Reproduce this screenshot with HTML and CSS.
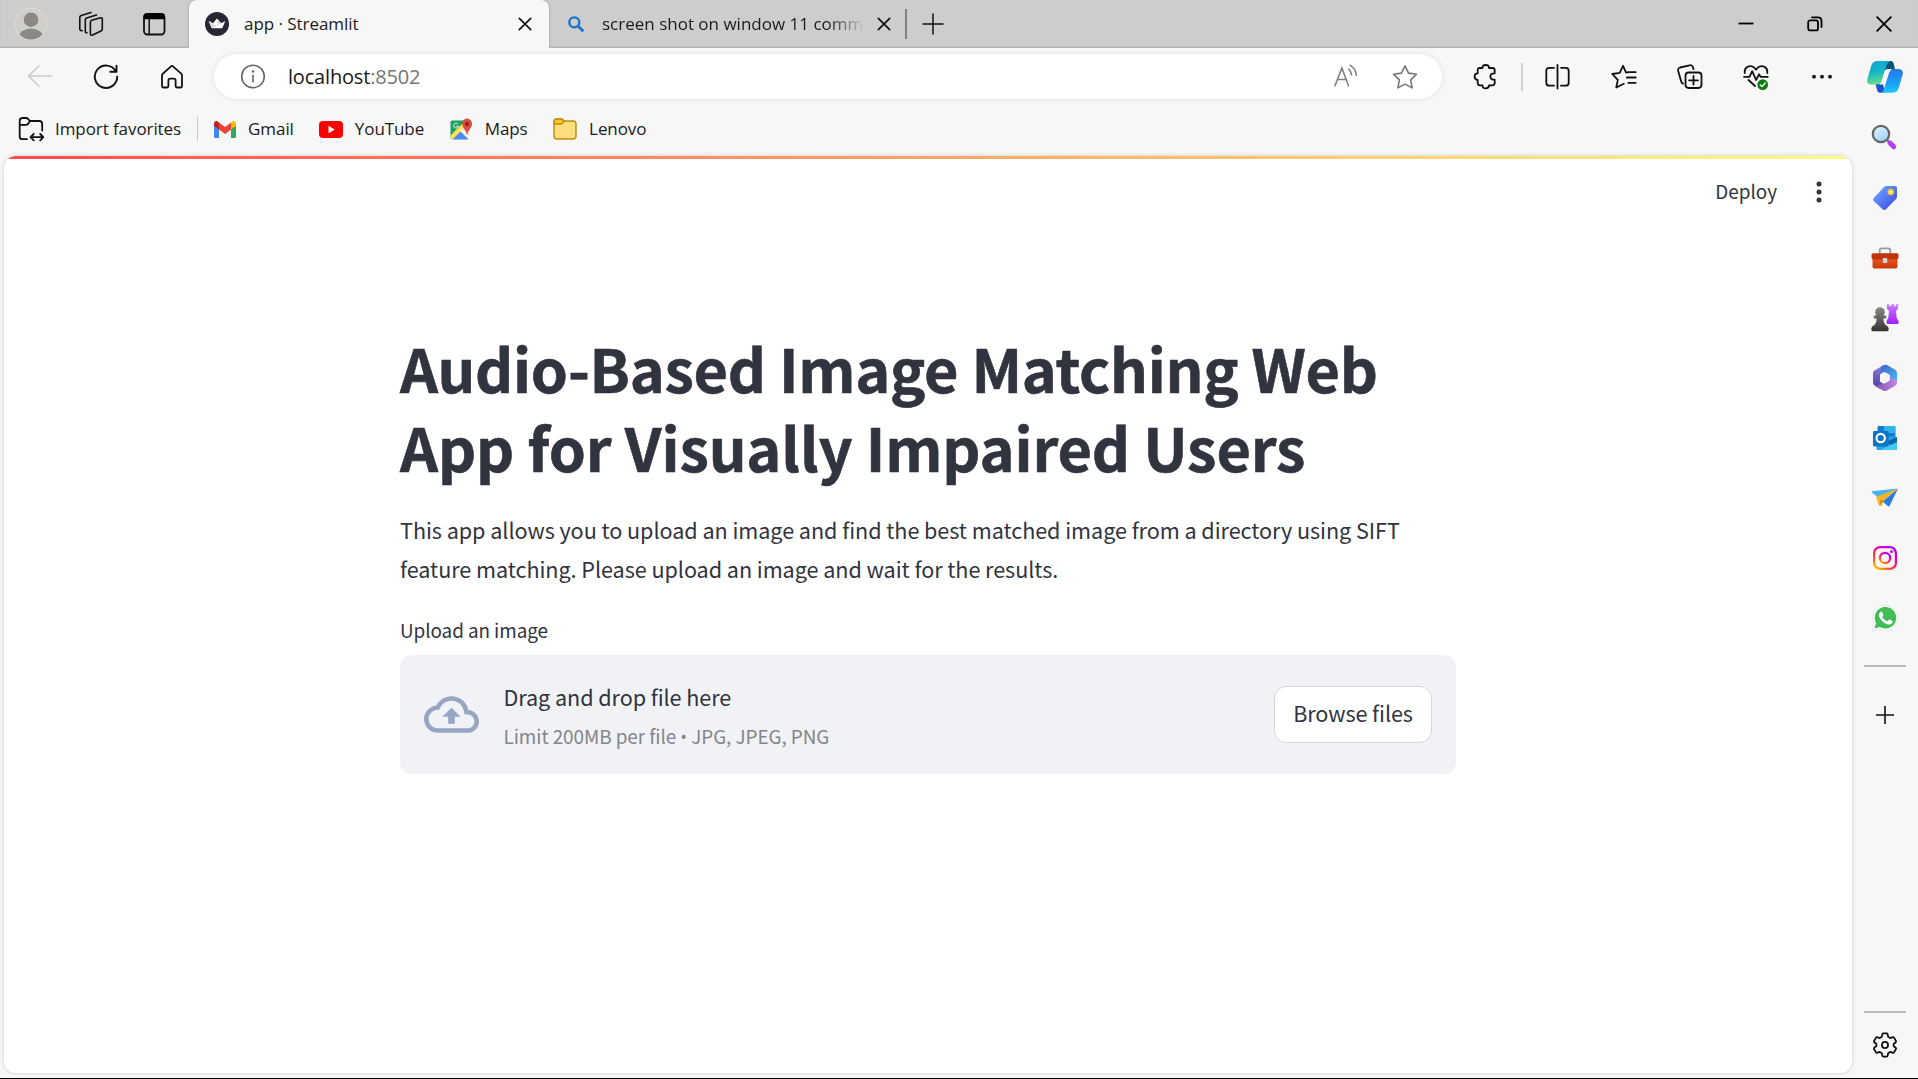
FILE: index.html
```html
<!DOCTYPE html>
<html lang="en">
<head>
<meta charset="utf-8">
<title>app · Streamlit</title>
<link rel="stylesheet" href="styles.css">
</head>
<body>
<div class="window">
  <header class="titlebar">
    <div class="title-tools">
      <svg class="avatar" viewBox="0 0 34 34"><defs><clipPath id="av"><circle cx="17" cy="17" r="15.5"/></clipPath></defs><circle cx="17" cy="17" r="16" fill="#d1cfcb" stroke="#e0deda"/><g fill="#8c8985" clip-path="url(#av)"><circle cx="17" cy="12.7" r="7.3"/><ellipse cx="17" cy="31" rx="12.5" ry="9.5"/></g></svg>
      <svg class="i26 workspaces" viewBox="0 0 26 26" fill="none" stroke="#111" stroke-width="1.6" stroke-linejoin="round" stroke-linecap="round"><path d="M12.4 11.2Q12.4 9.8 13.7 9.3L22.5 6.8Q24.3 6.5 24.3 8.2V18Q24.3 19.4 23 20L14.6 24Q12.4 24.8 12.4 22.6Z"/><path d="M9 21.7Q7.5 22 7.3 20.4V9Q7.3 7.5 8.7 7L18.4 3.9"/><path d="M4.1 19.6Q1.8 20 1.8 17.8V6.4Q1.8 5 3.2 4.5L13 1.6"/></svg>
      <svg class="i26" viewBox="0 0 26 26"><rect x="3" y="3" width="20.5" height="20.5" rx="3.4" fill="none" stroke="#111" stroke-width="1.8"/><path d="M2.5 8.2V5.5Q2.5 2.3 5.8 2.3H20.5Q24 2.3 24 5.5V8.2Z" fill="#000"/><path d="M8.2 8V23" stroke="#111" stroke-width="1.5"/></svg>
    </div>
    <div class="tab active">
      <svg class="i24" viewBox="0 0 24 24"><circle cx="12" cy="12" r="12" fill="#262730"/><path d="M3.7 9L8 11.2L12 6.6L16 11.2L20.3 9L17.6 15.5Q17.3 16.2 16.4 16.2H7.6Q6.7 16.2 6.4 15.5Z" fill="#fff"/><path d="M12 6.6L16 11.2L8 16.2H7.6Q6.7 16.2 6.4 15.5L3.7 9L12 14Z" fill="#ddd"/></svg>
      <span class="tab-title">app · Streamlit</span>
      <svg class="i14" viewBox="0 0 14 14" stroke="#111" stroke-width="1.7" stroke-linecap="round"><path d="M1.3 1.3L12.7 12.7M12.7 1.3L1.3 12.7"/></svg>
    </div>
    <div class="tab second">
      <svg class="i16" viewBox="0 0 16 16" fill="none" stroke="#1b74c9" stroke-width="2.3"><circle cx="6.3" cy="6.3" r="5"/><path d="M10 10L15.3 15.3" stroke-width="2.8"/></svg>
      <span class="tab-title fade">screen shot on window 11 comm</span>
      <svg class="i14" viewBox="0 0 14 14" stroke="#111" stroke-width="1.7" stroke-linecap="round"><path d="M1.3 1.3L12.7 12.7M12.7 1.3L1.3 12.7"/></svg>
    </div>
    <i class="tab-sep"></i>
    <svg class="i22" viewBox="0 0 22 22" stroke="#111" stroke-width="1.5"><path d="M11 .5V21.5M.5 11H21.5"/></svg>
    <div class="caption-buttons">
      <svg class="i16" viewBox="0 0 16 16" stroke="#000" stroke-width="1.8"><path d="M.5 7.5H15.5"/></svg>
      <svg class="i16" viewBox="0 0 16 16" fill="none" stroke="#000" stroke-width="1.8" stroke-linecap="round"><rect x="1.2" y="4.4" width="9.8" height="10" rx="2"/><path d="M5 1.3H11Q14.5 1.3 14.5 5V11"/></svg>
      <svg class="i16" viewBox="0 0 16 16" stroke="#000" stroke-width="1.8" stroke-linecap="round"><path d="M1.2 1.2L14.8 14.8M14.8 1.2L1.2 14.8"/></svg>
    </div>
  </header>

  <nav class="toolbar">
    <div class="nav-buttons">
      <svg class="i26" viewBox="0 0 26 26" fill="none" stroke="#cbcbcb" stroke-width="1.6" stroke-linecap="round" stroke-linejoin="round"><path d="M24.5 12H1.5M12 1.8L1.5 12L12 22.3"/></svg>
      <svg class="i26" viewBox="0 0 26 26" fill="none" stroke="#111" stroke-width="1.9" stroke-linecap="round" stroke-linejoin="round"><path d="M22.8 7.3A11.2 11.2 0 1 0 24.2 12.6M23.5 1.6V7.8H17.3"/></svg>
      <svg class="i26" viewBox="0 0 26 26" fill="none" stroke="#111" stroke-width="1.8" stroke-linejoin="round"><path d="M3 11.4Q3 10.4 3.8 9.7L12 2.3Q13 1.5 14 2.3L22.2 9.7Q23 10.4 23 11.4V21.7Q23 23.5 21.3 23.5H18Q16.6 23.5 16.6 22V16.4Q16.6 14.6 14.9 14.6H11.1Q9.4 14.6 9.4 16.4V22Q9.4 23.5 8 23.5H4.7Q3 23.5 3 21.7Z"/></svg>
    </div>
    <div class="address">
      <svg class="i26" viewBox="0 0 26 26" fill="none" stroke="#666" stroke-width="1.6"><circle cx="13" cy="12.5" r="11.3"/><path d="M13 10.8V18.5"/><circle cx="13" cy="7.5" r="1.2" fill="#666" stroke="none"/></svg>
      <span class="url">localhost<span class="port">:8502</span></span>
      <svg class="i26 read" viewBox="0 0 26 26" fill="none" stroke="#808080" stroke-width="1.6" stroke-linecap="round"><path d="M2 21.7L8.9 4L15.5 21.7M4.4 15.5H13.2M15.8 5.2Q18.2 7.5 18.6 11M17.2 1.4Q22.8 4.5 23.3 11.2"/></svg>
      <svg class="i26" viewBox="0 0 26 26" fill="none" stroke="#777" stroke-width="1.6" stroke-linejoin="round"><path d="M13 1.8L16.5 9.1L24.5 10.2L18.7 15.8L20.1 23.9L13 20.1L5.9 23.9L7.3 15.8L1.5 10.2L9.5 9.1Z"/></svg>
    </div>
    <div class="tools">
      <svg class="i26" viewBox="0 0 26 26" fill="none" stroke="#111" stroke-width="1.8" stroke-linejoin="round"><path d="M6.3 4H9.5Q9.2 1 12.7 1T16 4H19.5Q21.7 4 21.7 6.2V9.3Q17.4 9.1 17.4 12.5T21.7 15.7V19.1Q21.7 21.3 19.5 21.3H16Q16 24.3 12.7 24.3T9.5 21.3H6.8Q4.7 21.3 4.7 19.1V15.8Q1.6 15.7 1.6 12.5T4.7 9.3V6Q4.7 4 6.3 4Z"/></svg>
      <i class="tool-sep"></i>
      <svg class="i26" viewBox="0 0 26 26" fill="none" stroke="#111" stroke-width="1.8" stroke-linecap="round"><path d="M12.5 1V24.5M9 3.8H4.3Q1.3 3.8 1.3 6.8V18.7Q1.3 21.7 4.3 21.7H9M16 3.8H20.7Q23.7 3.8 23.7 6.8V18.7Q23.7 21.7 20.7 21.7H16"/></svg>
      <svg class="i26" viewBox="0 0 26 26" fill="none" stroke="#111" stroke-width="1.8" stroke-linejoin="round" stroke-linecap="round"><path d="M16.5 8.5L15 8.4L12 1.8L8.7 8.8L1.3 10L6.8 15.8L5.3 23.5L12.8 19.8M17.3 8.2H24.7M15.8 13.5H24.7M17.3 18.8H24.7"/></svg>
      <svg class="i26" viewBox="0 0 26 26" fill="none" stroke="#111" stroke-width="1.8" stroke-linecap="round" stroke-linejoin="round"><rect x="8.5" y="8.5" width="16" height="15.5" rx="3.2"/><path d="M16.5 12V20.6M12.1 16.3H20.9M5.9 19.7Q4.7 19.2 4.3 17.8L1.2 7Q.5 4.3 3 3.5L12.5 1.3Q15.1.7 15.9 3.2L16.5 5.1"/></svg>
      <svg class="i26" viewBox="0 0 26 26" fill="none" stroke="#111" stroke-width="1.8" stroke-linecap="round" stroke-linejoin="round"><path d="M1.8 9Q1.1 4.8 4.6 2.8Q8.4 1 11 3.5L13 5.6L15 3.5Q17.6 1 21.4 2.8Q24.9 4.8 24.2 9M1 12.8H6.5L9.2 7.2L13.1 16L16 10.3L17.6 12.8H24.8M5.5 16L12 22"/><circle cx="19.7" cy="20.7" r="5.4" fill="#107c10" stroke="none"/><path d="M17.3 21L19 22.6L22.2 19" stroke="#fff" stroke-width="1.3"/></svg>
      <svg class="i26" viewBox="0 0 26 26" fill="#111"><circle cx="5" cy="12.7" r="1.9"/><circle cx="13" cy="12.7" r="1.9"/><circle cx="21" cy="12.7" r="1.9"/></svg>
    </div>
    <svg class="copilot" viewBox="0 0 36 34"><defs><linearGradient id="c1" x2=".2" y2="1"><stop stop-color="#13a4da"/><stop offset=".5" stop-color="#12b5c5"/><stop offset="1" stop-color="#62dc8b"/></linearGradient><linearGradient id="c2" x2="0" y2="1"><stop stop-color="#2879e5"/><stop offset=".6" stop-color="#199ffa"/><stop offset="1" stop-color="#20c6fb"/></linearGradient></defs><path d="M19 1H24Q25.8 1 26.5 3L28.2 10H18Z" fill="#075579"/><path d="M8.5 24H16L18 32.7H13Q11 32.7 10.2 30.2Z" fill="#1b55cd"/><path d="M17.5 13.5Q18.7 9 22 9H25L21 14L17 24H13.2Q14.5 23 15 21.5Z" fill="#f7f7f7"/><path d="M10.5 1H23.5Q20.5 1.8 19.6 5L15 20.5Q13.8 24.5 9.8 24.5H3.8Q-.3 24.2.2 19.5L4.5 5Q6 1 10.5 1Z" fill="url(#c1)"/><path d="M25 32.7H14.5Q16.3 31.7 17 29L21.5 14.5Q22.9 9 26.5 9H32.2Q36.2 9.5 35.8 14L31.5 28.4Q30 32.7 25 32.7Z" fill="url(#c2)"/><path d="M17.6 11.5Q18.4 9 21 9H24.5Q22.3 10.6 21.5 13.5L19 21.5Q18.2 24.3 15.5 24.5H12.5Q14.4 23 15 20.5Z" fill="#f7f7f7"/></svg>
  </nav>

  <div class="bookmarks">
    <svg class="i26 import" viewBox="0 0 26 26" fill="none" stroke="#111" stroke-width="1.8" stroke-linejoin="round" stroke-linecap="round"><path d="M9 23.2H4.6Q1.7 23.2 1.7 20.4V5Q1.7 2 4.6 2H8Q9.2 2 10 2.9L12 5H21.2Q24.2 5 24.2 8V14.5M1.8 8.8H8Q9.2 8.8 10 8L12 5M13 21.2H25M15.7 18L12.5 21.2L15.7 24.4M22.2 18L25.4 21.2L22.2 24.4"/></svg>
    <span class="bookmark">Import favorites</span>
    <i class="bm-sep"></i>
    <svg class="gmail" viewBox="0 0 22 17"><path d="M0 3V15.5Q0 17 1.5 17H5V7Z" fill="#4285f4"/><path d="M22 3V15.5Q22 17 20.5 17H17V7Z" fill="#34a853"/><path d="M17 1.5V8.5L22 4.8V3Q22 0 19.4 0Q18.3 0 17 1.5Z" fill="#fbbc04"/><path d="M5 1.5V8.5L0 4.8V3Q0 0 2.6 0Q3.7 0 5 1.5Z" fill="#c5221f"/><path d="M5 1.5L11 6L17 1.5V8.5L11 13L5 8.5Z" fill="#ea4335"/></svg>
    <span class="bookmark">Gmail</span>
    <svg class="youtube" viewBox="0 0 24 17"><rect width="24" height="17" rx="4" fill="#f00"/><path d="M9.5 4.7L15.8 8.5L9.5 12.3Z" fill="#fff"/></svg>
    <span class="bookmark">YouTube</span>
    <svg class="maps" viewBox="0 0 23 23"><defs><clipPath id="mp"><rect x=".5" y="2.5" width="19" height="19" rx="2"/></clipPath></defs><g clip-path="url(#mp)"><rect y="2" width="20" height="20" fill="#e1e3e5"/><path d="M0 2H17L11 12L0 22Z" fill="#1ea362"/><path d="M0 22V18L14 4L17 7L3 22Z" fill="#ffdf50"/><path d="M2 22L10.5 13.5L19 22Z" fill="#4a8cf5"/><path d="M10.5 11.5L20 20" stroke="#fff" stroke-width="2"/></g><path d="M17 17.5Q16.6 13.5 14 10.5Q11.3 6.9 12.5 4Q14 .5 17 .5T21.8 4Q22.9 7.2 20.2 10.5Q17.5 13.5 17 17.5Z" fill="#dd4b3e"/><circle cx="17" cy="6" r="2" fill="#822921"/><path d="M8.1 6.2A2.4 2.4 0 1 0 8.5 8.2H6.3" stroke="#d9efe3" stroke-width="1" fill="none"/></svg>
    <span class="bookmark">Maps</span>
    <svg class="folder" viewBox="0 0 24 22"><path d="M1 4Q1 1 4 1H8Q9.5 1 11 3H20Q23 3 23 6V18Q23 21 20 21H4Q1 21 1 18Z" fill="#ffdc7c" stroke="#bd8b12" stroke-width="1.4"/><path d="M1 6V4Q1 1 4 1H8Q9.6 1 11 3Q9.8 6 8 6Z" fill="#f9c82e" stroke="#bd8b12" stroke-width="1.4"/></svg>
    <span class="bookmark">Lenovo</span>
  </div>

  <div class="body">
    <main class="page">
      <div class="decoration"></div>
      <div class="app-header">
        <span class="deploy">Deploy</span>
        <svg class="kebab" viewBox="0 0 6 22" fill="#31333f"><circle cx="3" cy="3" r="2.5"/><circle cx="3" cy="11" r="2.5"/><circle cx="3" cy="19" r="2.5"/></svg>
      </div>
      <section class="block">
        <h1><span class="first-line">Audio-Based Image Matching Web</span><br>App for Visually Impaired Users</h1>
        <p>This app allows you to upload an image and find the best matched image from a directory using SIFT<br>feature matching. Please upload an image and wait for the results.</p>
        <label>Upload an image</label>
        <div class="dropzone">
          <svg class="cloud" viewBox="0 0 24 24" fill="#98a6c5"><path d="M19.35 10.04A7.49 7.49 0 0 0 12 4C9.11 4 6.6 5.64 5.35 8.04A5.994 5.994 0 0 0 0 14c0 3.31 2.69 6 6 6h13c2.76 0 5-2.24 5-5 0-2.64-2.05-4.78-4.65-4.96zM19 18H6c-2.21 0-4-1.79-4-4 0-2.05 1.53-3.76 3.56-3.97l1.07-.11.5-.95A5.469 5.469 0 0 1 12 6c2.62 0 4.88 1.86 5.39 4.43l.3 1.5 1.53.11A2.98 2.98 0 0 1 22 15c0 1.65-1.35 3-3 3zM8 13h2.55v3h2.9v-3H16l-4-4z"/></svg>
          <div class="instructions">
            <span class="drag">Drag and drop file here</span>
            <span class="limit">Limit 200MB per file <span class="bullet">•</span> JPG, JPEG, PNG</span>
          </div>
          <button class="browse">Browse files</button>
        </div>
      </section>
    </main>
    <aside class="sidebar">
      <svg class="search" viewBox="0 0 28 28"><defs><linearGradient id="s1" x2=".5" y2="1"><stop stop-color="#e6f7ff"/><stop offset="1" stop-color="#9ed3f5"/></linearGradient></defs><circle cx="11" cy="11" r="8.2" fill="url(#s1)" stroke="#666" stroke-width="2.2"/><path d="M17 17L19.5 19.5" stroke="#777" stroke-width="2.5"/><path d="M20 20L23.8 23.8" stroke="#b53cf5" stroke-width="4.8" stroke-linecap="round"/></svg>
      <svg viewBox="0 0 28 28"><defs><linearGradient id="s2" x2="1" y2="1"><stop stop-color="#73b3ff"/><stop offset="1" stop-color="#3c3fe8"/></linearGradient></defs><path d="M2.7 14L13 3Q14 2 15.5 2H24Q26 2 26 4V12.3Q26 13.8 25 15L15 25.3Q13.3 26.5 11.7 25.2L2.7 17Q1.3 15.5 2.7 14Z" fill="url(#s2)"/><circle cx="19.8" cy="8" r="2.4" fill="#eee" stroke="#ffcd0f" stroke-width="1.7"/></svg>
      <svg viewBox="0 0 28 28"><defs><linearGradient id="s3" x2="0" y2="1"><stop stop-color="#f05b25"/><stop offset="1" stop-color="#c73808"/></linearGradient></defs><path d="M8.7 10V6.5Q8.7 4.3 11 4.3H17Q19.3 4.3 19.3 6.5V10" fill="none" stroke="#999" stroke-width="1.8"/><path d="M1.5 13H26.5V22.5Q26.5 24.5 24.5 24.5H3.5Q1.5 24.5 1.5 22.5Z" fill="url(#s3)"/><path d="M2 9.3H26Q27.5 9.3 27.5 11V13Q27.5 15.5 25 15.5H3Q.5 15.5.5 13V11Q.5 9.3 2 9.3Z" fill="#bd360c"/><rect x="11.8" y="14" width="4.5" height="5" rx="1" fill="#d4d4d4"/></svg>
      <svg viewBox="0 0 28 28"><defs><linearGradient id="s4" x2="0" y2="1"><stop stop-color="#c97aff"/><stop offset="1" stop-color="#a020f5"/></linearGradient><linearGradient id="s5" x2="0" y2="1"><stop stop-color="#8a8a8a"/><stop offset="1" stop-color="#343434"/></linearGradient></defs><path d="M16 .3H18.3V2.3H20.3V.3H23.2V2.3H25.2V.3H27.3L26.6 5.5L25 7L25.7 14L27.6 17Q28 20 27 20H16Q15 18 16 16L17.3 14L18 7L16 5Z" fill="url(#s4)"/><path d="M9 3.2A5 5 0 0 1 12.6 11.5H15.2V14.5H12.4Q12.2 18.5 14.5 21Q17.6 22 17.7 25.2Q17.8 27.2 16 27.2H2Q.2 27.2.3 25.2Q.4 22 3.5 21Q5.8 18.5 5.6 14.5H2.8V11.5H5.4A5 5 0 0 1 9 3.2Z" fill="url(#s5)"/></svg>
      <svg viewBox="0 0 28 28"><defs><linearGradient id="m1" x2="0" y2="1"><stop stop-color="#8a7ddb"/><stop offset="1" stop-color="#4b3f9e"/></linearGradient><linearGradient id="m2" x2="1" y2="1"><stop stop-color="#3d63cf"/><stop offset="1" stop-color="#4bb9f0"/></linearGradient><linearGradient id="m3" x2="1"><stop stop-color="#7a56ae"/><stop offset="1" stop-color="#c583e2"/></linearGradient></defs><path d="M12.5 1.2L3.8 6.3Q2 7.4 2 9.5V18.5Q2 20.6 3.8 21.7L9 24.7L14 21L9 17.5V10.5L12.5 8Z" fill="url(#m1)"/><path d="M10.5 2.3L13 1Q14.5.3 16 1L24.2 5.8Q26 7 26 9V17.5L18.8 13V10.8L14 8.2L9.5 8.5Z" fill="url(#m2)"/><path d="M26 17.5V18.7Q26 20.6 24.2 21.7L16 26.5Q14 27.5 12 26.5L4 21.8L13.5 19.5L18.8 16.5V12.5Z" fill="url(#m3)"/><path d="M14 9L18.5 11.5V16.5L14 19L9.5 16.5V11.5Z" fill="#f7f7f7"/></svg>
      <svg viewBox="0 0 28 28"><rect x="6.5" y="2" width="18" height="14" rx="1" fill="#127ed0"/><path d="M13 2H24V9H13Z" fill="#31b4e8"/><path d="M5.5 12L26 13V24.5Q26 26 24.5 26H7Q5.5 26 5.5 24.5Z" fill="#27a1e5"/><path d="M26 13V24L15 18Z" fill="#0f63b0"/><path d="M26 25Q25.5 26 24 26H9L26 18Z" fill="#3fcaf2"/><rect x="2" y="7" width="15.5" height="15.5" rx="1.4" fill="#0874c5"/><circle cx="9.7" cy="14" r="4.2" fill="none" stroke="#fff" stroke-width="2.2"/></svg>
      <svg viewBox="0 0 28 28"><path d="M.5 7.3L27 4.5L9.5 15.5L1 8.5Z" fill="#47b2ee"/><path d="M27 4.5L18.5 22Q18 23 17 22.2L11.5 17.6Z" fill="#287de5"/><path d="M27 4.5L5 12.8L8 21.5L11 22L12.5 16.5Z" fill="#f6b327"/><path d="M8 21.5L10 15.5L12.5 16.7Z" fill="#c98614"/></svg>
      <svg viewBox="0 0 28 28"><defs><linearGradient id="ig" x1=".1" y1="1" x2=".8"><stop stop-color="#ffc500"/><stop offset=".25" stop-color="#ff5d24"/><stop offset=".5" stop-color="#ff1768"/><stop offset=".75" stop-color="#e900b7"/><stop offset="1" stop-color="#a500ff"/></linearGradient></defs><g fill="none" stroke="url(#ig)" stroke-width="2.2"><rect x="3.1" y="3.1" width="21.8" height="21.8" rx="6"/><circle cx="14" cy="14" r="5.1"/></g><circle cx="20.5" cy="7.6" r="1.5" fill="#d100d0"/></svg>
      <svg viewBox="0 0 28 28"><path d="M1 27L3 19.6A12.6 12.6 0 1 1 8.6 25.1Z" fill="#fff" stroke="#ddd" stroke-width=".7"/><path d="M3.5 24.5L5 19A10.8 10.8 0 1 1 9 23.1Z" fill="#41bf56"/><path d="M9.5 7.8Q10.6 7 11.3 8.2L12.3 10.7Q12.5 11.4 11.5 12.5Q11.1 13 11.5 13.6Q13.3 16 15.8 17Q16.5 17.3 17 16.7Q18 15.2 18.8 15.6L21.2 16.8Q22 17.3 21.5 18.8Q20 21.2 16.7 20.4Q10.6 18.5 8.1 12.5Q7.4 9.5 9.5 7.8Z" fill="#fff"/></svg>
      <i class="side-sep"></i>
      <svg class="add" viewBox="0 0 28 28" stroke="#111" stroke-width="1.6"><path d="M14 5V23M5 14H23"/></svg>
      <i class="side-sep low"></i>
      <svg class="gear" viewBox="0 0 28 28" fill="none" stroke="#111" stroke-width="1.9" stroke-linejoin="round"><path d="M12.2 1.5H15.8Q16.6 1.5 16.8 2.3L17.4 5.2L19.6 6.5L22.5 5.6Q23.3 5.4 23.7 6.1L25.8 9.7Q26.2 10.4 25.6 11L23.3 12.9V15.1L25.6 17Q26.2 17.6 25.8 18.3L23.7 21.9Q23.3 22.6 22.5 22.4L19.6 21.5L17.4 22.8L16.8 25.7Q16.6 26.5 15.8 26.5H12.2Q11.4 26.5 11.2 25.7L10.6 22.8L8.4 21.5L5.5 22.4Q4.7 22.6 4.3 21.9L2.2 18.3Q1.8 17.6 2.4 17L4.7 15.1V12.9L2.4 11Q1.8 10.4 2.2 9.7L4.3 6.1Q4.7 5.4 5.5 5.6L8.4 6.5L10.6 5.2L11.2 2.3Q11.4 1.5 12.2 1.5Z"/><circle cx="14" cy="14" r="3.3"/></svg>
    </aside>
  </div>
</div>
</body>
</html>
```
FILE: styles.css
```css
* { box-sizing: border-box; }
body { margin: 0; background: #000; }
svg { display: block; flex: none; }
.window {
  width: 1918px; height: 1078px; background: #f7f7f7; overflow: hidden;
  display: flex; flex-direction: column;
  font-family: "Open Sans", "Noto Sans", sans-serif; font-size: 18px; color: #1a1a1a;
}
.i14 { width: 14px; height: 14px; }
.i16 { width: 16px; height: 16px; }
.i22 { width: 22px; height: 22px; }
.i24 { width: 24px; height: 24px; }
.i26 { width: 26px; height: 26px; }

.titlebar { flex: none; height: 48px; background: #cdcdcd; display: flex; align-items: center; box-shadow: inset 0 -2px 2px -1px #aaa; }
.title-tools { width: 189px; padding-left: 14px; display: flex; align-items: center; }
.avatar { width: 34px; height: 34px; margin-right: 30px; }
.workspaces { margin-right: 37px; }
.tab { height: 48px; display: flex; align-items: center; font-size: 17px; }
.tab.active { width: 360px; padding: 0 17px 0 16px; background: #f7f7f7; border-radius: 8px 8px 0 0; box-shadow: 0 0 3px #999; clip-path: inset(0 -4px 0 -4px); }
.tab-title { flex: 1; margin-left: 15px; padding-bottom: 2px; white-space: nowrap; letter-spacing: -.05px; }
.tab.second { width: 357px; padding: 0 15px 0 19px; }
.second .tab-title { margin-left: 18px; letter-spacing: 0; }
.fade { -webkit-mask-image: linear-gradient(90deg, #000 225px, transparent 263px); mask-image: linear-gradient(90deg, #000 225px, transparent 263px); }
.tab-sep { width: 2px; height: 30px; background: #808080; margin: 0 15px 0 -1px; }
.caption-buttons { margin-left: auto; padding-right: 26px; display: flex; gap: 53px; }

.toolbar { flex: none; height: 57px; display: flex; align-items: center; }
.nav-buttons { width: 214px; padding-left: 27px; display: flex; gap: 40px; }
.address { width: 1228px; height: 45px; border-radius: 23px; background: #fff; box-shadow: 0 0 5px #ddd; display: flex; align-items: center; padding: 0 24px 0 26px; }
.url { flex: 1; margin-left: 22px; padding-bottom: 1px; font-size: 20px; letter-spacing: -.18px; }
.port { color: #757575; }
.read { margin-right: 33px; }
.tools { display: flex; align-items: center; margin-left: 31px; gap: 40px; }
.tool-sep { width: 2px; height: 28px; background: #cfcfcf; margin: 0 -18px; }
.copilot { width: 36px; height: 34px; margin-left: 32px; }

.bookmarks { flex: none; height: 51px; display: flex; align-items: center; padding: 0 0 3px 18px; }
.bookmark { font-size: 17px; letter-spacing: -.08px; padding-bottom: 2px; white-space: nowrap; }
.import { margin-right: 11px; }
.bm-sep { width: 1px; height: 24px; background: #c8c8c8; margin: 0 16px; }
.gmail { width: 22px; height: 17px; margin-right: 12px; }
.youtube { width: 24px; height: 17px; margin: 0 12px 0 25px; }
.maps { width: 23px; height: 23px; margin: 0 12px 0 25.5px; }
.folder { width: 24px; height: 22px; margin: 0 12.5px 0 25px; }

.body { flex: 1; min-height: 0; display: flex; }
.page { width: 1848px; height: 917px; margin-left: 4px; background: #fff; border-radius: 12px; overflow: hidden; box-shadow: 0 0 4px #ccc; font-family: "Noto Sans CJK SC", "Noto Sans CJK JP", sans-serif; color: #31333f; }
.decoration { height: 3px; background: linear-gradient(90deg, #ff4b4b, #fffd80); }
.app-header { height: 66px; display: flex; align-items: center; justify-content: flex-end; padding-right: 30px; }
.deploy { font-size: 18.9px; margin-right: 39px; padding-bottom: 3px; }
.kebab { width: 6px; height: 22px; }
.block { width: 1056px; margin: 103px 0 0 396px; }
h1 { margin: 0; font-size: 59.4px; line-height: 79.2px; font-weight: 700; letter-spacing: -.14px; white-space: nowrap; -webkit-text-stroke: .6px #31333f; }
.first-line { letter-spacing: -.3px; }
p { margin: 25px 0 0; font-size: 21.6px; line-height: 38.4px; letter-spacing: -.055px; white-space: nowrap; }
label { display: block; margin-top: 25px; font-size: 18.9px; line-height: 34px; letter-spacing: -.07px; }
.dropzone { height: 119px; margin-top: 8px; background: #f0f2f6; border-radius: 12px; padding: 0 24px; display: flex; align-items: center; }
.cloud { width: 55px; height: 55px; }
.instructions { flex: 1; margin: 3px 0 0 24.5px; display: flex; flex-direction: column; white-space: nowrap; }
.drag { font-size: 21.6px; line-height: 38px; letter-spacing: -.07px; }
.limit { font-size: 18.9px; line-height: 39px; color: #83858c; letter-spacing: -.06px; }
.bullet { font-family: "Open Sans", sans-serif; font-size: 18px; line-height: 1; }
.browse { width: 158px; height: 57px; padding: 0 0 3px; border: 1.5px solid #d6d6d9; border-radius: 12px; background: #fff; color: inherit; font: 21.6px/38px "Noto Sans CJK SC", sans-serif; letter-spacing: -.08px; }

.sidebar { width: 66px; display: flex; flex-direction: column; align-items: center; margin-top: -32px; }
.sidebar svg { width: 28px; height: 28px; margin-bottom: 32px; }
.sidebar .search { margin: -1px 2px 33px 0; }
.side-sep { width: 42px; height: 1.5px; background: #bdbdbd; margin-top: 1px; }
.sidebar .add { margin: 34px 1px 0 0; }
.low { margin-top: auto; height: 2px; }
.sidebar .gear { margin: 19px 0 20px; width: 26px; height: 26px; }
```
